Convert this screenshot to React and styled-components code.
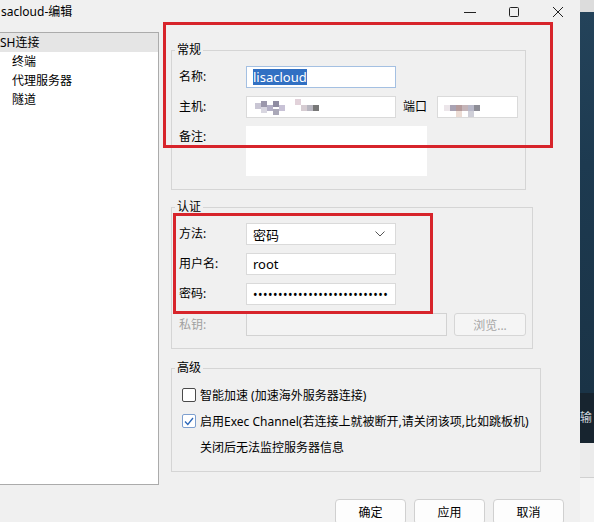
import React from 'react';
import styled, { createGlobalStyle } from 'styled-components';

const Global = createGlobalStyle`
  html, body {
    margin: 0;
    padding: 0;
    background: #f0f0f0;
    overflow: hidden;
  }
  body {
    font-family: "Noto Sans", "Noto Sans CJK SC", sans-serif;
    font-size: 12px;
    color: #000;
  }
`;

const Screen = styled.div`
  display: flex;
  width: 594px;
  height: 522px;
  overflow: hidden;
`;

const Window = styled.div`
  position: relative;
  width: 580px;
  display: flex;
  flex-direction: column;
  background: #f0f0f0;
`;

const TitleBar = styled.div`
  height: 24px;
  display: flex;
  align-items: center;
`;

const Title = styled.div`
  padding-left: 1px;
  line-height: 16px;
`;

const Controls = styled.div`
  margin-left: auto;
  display: flex;
`;

const Control = styled.div`
  width: 44px;
  height: 24px;
  display: flex;
  align-items: center;
  justify-content: center;
  svg {
    display: block;
  }
`;

const Body = styled.div`
  display: flex;
  padding-top: 8px;
  height: 461px;
  box-sizing: border-box;
`;

const Tree = styled.div`
  width: 159px;
  height: 453px;
  background: #fff;
  border: 1px solid #ababab;
  border-left: none;
  box-sizing: border-box;
`;

const TreeItem = styled.div`
  height: 19px;
  line-height: 19px;
  padding-left: ${(p) => (p.$child ? 12 : 0)}px;
  background: ${(p) => (p.$selected ? '#e5e5e5' : 'transparent')};
`;

const Content = styled.div`
  margin-left: 12px;
  padding-top: 18px;
  display: flex;
  flex-direction: column;
`;

const Group = styled.div`
  width: ${(p) => p.$w}px;
  margin-top: ${(p) => p.$mt || 0}px;
  border: 1px solid #d5d5d5;
  box-sizing: border-box;
  padding: 0 0 ${(p) => p.$pb}px 7px;
`;

const Legend = styled.div`
  margin: -9px 0 0 -4px;
  padding: 0 2px;
  width: fit-content;
  line-height: 16px;
  background: #f0f0f0;
`;

const Rows = styled.div`
  display: flex;
  flex-direction: column;
  gap: ${(p) => p.$gap}px;
  margin-top: ${(p) => p.$mt}px;
`;

const Row = styled.div`
  display: flex;
  align-items: ${(p) => (p.$top ? 'flex-start' : 'center')};
`;

const Label = styled.div`
  width: ${(p) => p.$w || 67}px;
  line-height: 18px;
  color: ${(p) => (p.$disabled ? '#a0a0a0' : '#000')};
  padding-top: ${(p) => (p.$top ? 2 : 0)}px;
`;

const Field = styled.div`
  position: relative;
  width: ${(p) => p.$w}px;
  height: ${(p) => p.$h || 22}px;
  box-sizing: border-box;
  border: 1px solid ${(p) => (p.$focus ? '#a4c0e2' : p.$disabled ? '#d2d2d2' : p.$plain ? 'transparent' : '#dadada')};
  background: ${(p) => (p.$disabled ? '#f3f3f3' : '#fff')};
  display: flex;
  align-items: center;
  padding: 0 6px;
  font-size: 13px;
  overflow: hidden;
  white-space: nowrap;
`;

const Selected = styled.span`
  background: #3170c3;
  color: #fff;
  line-height: 16px;
`;

const Dots = styled.span`
  font-size: 12px;
  letter-spacing: 0.5px;
`;

const Chevron = styled.svg`
  margin-left: auto;
  margin-right: 4px;
`;

const PortLabel = styled.div`
  width: 26px;
  margin: 0 8px 0 7px;
  line-height: 18px;
`;

const Mosaic = styled.svg`
  position: absolute;
  left: ${(p) => p.$x}px;
  top: -2px;
`;

const SmallButton = styled.div`
  width: 72px;
  height: 23px;
  margin-left: 7px;
  box-sizing: border-box;
  border: 1px solid #d6d6d6;
  border-radius: 3px;
  background: #f5f5f5;
  color: #a6a6a6;
  display: flex;
  align-items: center;
  justify-content: center;
`;

const CheckRow = styled.div`
  height: 26px;
  display: flex;
  align-items: center;
  gap: 4px;
  padding-left: ${(p) => (p.$indent ? 21 : 3)}px;
`;

const Box = styled.div`
  width: 14px;
  height: 14px;
  box-sizing: border-box;
  border: 1px solid ${(p) => (p.$checked ? '#7d9fcf' : '#4a4a4a')};
  border-radius: 2px;
  background: #fff;
  display: flex;
  align-items: center;
  justify-content: center;
`;

const Footer = styled.div`
  display: flex;
  justify-content: flex-end;
  gap: 8px;
  padding: 14px 16px 0 0;
`;

const Button = styled.div`
  width: 71px;
  height: 26px;
  box-sizing: border-box;
  border: 1px solid #d0d0d0;
  border-radius: 4px;
  background: #fdfdfd;
  display: flex;
  align-items: center;
  justify-content: center;
`;

const Mark = styled.div`
  position: absolute;
  left: ${(p) => p.$x}px;
  top: ${(p) => p.$y}px;
  width: ${(p) => p.$w}px;
  height: ${(p) => p.$h}px;
  box-sizing: border-box;
  border: 3px solid #d7242b;
  pointer-events: none;
`;

const Desktop = styled.div`
  width: 14px;
  display: flex;
  flex-direction: column;
`;

const Band = styled.div`
  height: ${(p) => p.$h}px;
  flex: ${(p) => (p.$grow ? 1 : 'none')};
  background: ${(p) => p.$bg};
  border-bottom: ${(p) => (p.$line ? '1px solid #d0d0d0' : 'none')};
  color: #d0d6dc;
  font-size: 12px;
  line-height: 14px;
  white-space: nowrap;
  display: flex;
  align-items: center;
`;

const hostBlocks = [
  [6, 8, '#c9c6d4'], [12, 6, '#9b97ab'], [18, 10, '#b4b0c6'], [24, 6, '#8f8ca1'],
  [30, 10, '#c8c2d6'], [12, 12, '#d8d6e0'], [24, 14, '#aaa8b8'], [46, 4, '#e2d2da'],
  [52, 10, '#d6ccd2'], [58, 10, '#b8b6c0'], [64, 10, '#777'],
];

const portBlocks = [
  [4, 10, '#ece6ea'], [10, 10, '#a9a2b3'], [16, 10, '#b59b9c'], [22, 10, '#c4b4b8'],
  [28, 10, '#b8b8c8'], [34, 10, '#8d8d96'], [16, 16, '#ecdcd4'], [28, 16, '#cfcfd8'],
];

const MosaicArt = ({ blocks, x, w }) => (
  <Mosaic $x={x} width={w} height={26} viewBox={`0 0 ${w} 26`}>
    <rect x={0} y={2} width={w} height={22} fill="#fff" opacity="0.6" />
    {blocks.map(([bx, by, c], i) => (
      <rect key={i} x={bx} y={by} width={6} height={6} fill={c} />
    ))}
  </Mosaic>
);

const App = () => (
  <Screen>
    <Global />
    <Window>
      <TitleBar>
        <Title>sacloud-编辑</Title>
        <Controls>
          <Control>
            <svg width="12" height="12" viewBox="0 0 12 12">
              <line x1="0" y1="6.5" x2="12" y2="6.5" stroke="#222" strokeWidth="1" />
            </svg>
          </Control>
          <Control>
            <svg width="12" height="12" viewBox="0 0 12 12">
              <rect x="1.5" y="1.5" width="9" height="9" rx="1" fill="none" stroke="#222" strokeWidth="1" />
            </svg>
          </Control>
          <Control>
            <svg width="12" height="12" viewBox="0 0 12 12">
              <path d="M1 1 L11 11 M11 1 L1 11" stroke="#222" strokeWidth="1" />
            </svg>
          </Control>
        </Controls>
      </TitleBar>

      <Body>
        <Tree>
          <TreeItem $selected>SH连接</TreeItem>
          <TreeItem $child>终端</TreeItem>
          <TreeItem $child>代理服务器</TreeItem>
          <TreeItem $child>隧道</TreeItem>
        </Tree>

        <Content>
          <Group $w={355} $pb={13}>
            <Legend>常规</Legend>
            <Rows $gap={8} $mt={8}>
              <Row>
                <Label>名称:</Label>
                <Field $w={150} $focus>
                  <Selected>lisacloud</Selected>
                </Field>
              </Row>
              <Row>
                <Label>主机:</Label>
                <Field $w={150}>
                  <MosaicArt blocks={hostBlocks} x={2} w={72} />
                </Field>
                <PortLabel>端口</PortLabel>
                <Field $w={81}>
                  <MosaicArt blocks={portBlocks} x={2} w={42} />
                </Field>
              </Row>
              <Row $top>
                <Label $top>备注:</Label>
                <Field $w={181} $h={50} $plain />
              </Row>
            </Rows>
          </Group>

          <Group $w={362} $mt={17} $pb={12}>
            <Legend>认证</Legend>
            <Rows $gap={8} $mt={8}>
              <Row>
                <Label>方法:</Label>
                <Field $w={150}>
                  <span>密码</span>
                  <Chevron width="10" height="6" viewBox="0 0 10 6">
                    <polyline points="0.5,0.5 5,5 9.5,0.5" fill="none" stroke="#555" strokeWidth="1" />
                  </Chevron>
                </Field>
              </Row>
              <Row>
                <Label>用户名:</Label>
                <Field $w={150}>root</Field>
              </Row>
              <Row>
                <Label>密码:</Label>
                <Field $w={150}>
                  <Dots>{'•'.repeat(27)}</Dots>
                </Field>
              </Row>
              <Row>
                <Label $disabled>私钥:</Label>
                <Field $w={201} $h={23} $disabled />
                <SmallButton>浏览...</SmallButton>
              </Row>
            </Rows>
          </Group>

          <Group $w={370} $mt={19} $pb={11}>
            <Legend>高级</Legend>
            <Rows $gap={0} $mt={6}>
              <CheckRow>
                <Box />
                <span>智能加速 (加速海外服务器连接)</span>
              </CheckRow>
              <CheckRow>
                <Box $checked>
                  <svg width="10" height="9" viewBox="0 0 10 9">
                    <polyline points="1,4.5 3.8,7.5 9,1" fill="none" stroke="#2a66b8" strokeWidth="1.3" />
                  </svg>
                </Box>
                <span>启用Exec Channel(若连接上就被断开,请关闭该项,比如跳板机)</span>
              </CheckRow>
              <CheckRow $indent>
                <span>关闭后无法监控服务器信息</span>
              </CheckRow>
            </Rows>
          </Group>
        </Content>
      </Body>

      <Footer>
        <Button>确定</Button>
        <Button>应用</Button>
        <Button>取消</Button>
      </Footer>

      <Mark $x={163} $y={22} $w={390} $h={126} />
      <Mark $x={173} $y={213} $w={260} $h={101} />
    </Window>

    <Desktop>
      <Band $h={12} $bg="#dcdcdc" />
      <Band $grow $bg="linear-gradient(180deg, #24435a 0%, #1d3a50 40%, #1a3346 100%)" />
      <Band $h={50} $bg="#17242f">输</Band>
      <Band $h={34} $bg="#ebebeb" $line />
      <Band $h={44} $bg="#f4f4f4" />
    </Desktop>
  </Screen>
);

export default App;
